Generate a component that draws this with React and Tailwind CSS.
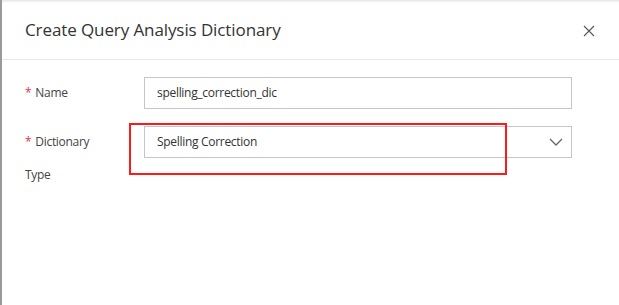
import React from 'react';

export default function App() {
  return (
    <div className="w-[619px] h-[305px] bg-white overflow-hidden relative border-l-2 border-[#9a9a9a] font-['Open_Sans',sans-serif] text-[#333]">
      {/* top shadow */}
      <div className="h-[3px] bg-gradient-to-b from-[#e6e6e6] to-white" />

      {/* Header */}
      <div className="h-[57px] flex items-center justify-between pl-[23px] pr-[24px] border-b border-[#e8e8e8]">
        <h1 className="text-[17px] text-[#333] tracking-[-0.1px] mt-[-2px]">Create Query Analysis Dictionary</h1>
        <button className="text-[#555] mt-[-1px]">
          <svg width="12" height="12" viewBox="0 0 12 12" fill="none" stroke="currentColor" strokeWidth="1.1">
            <path d="M1 1L11 11M11 1L1 11" />
          </svg>
        </button>
      </div>

      {/* Form */}
      <div className="pl-[23px] pt-[17px] text-[12px] tracking-[-0.3px]">
        <div className="flex">
          <div className="w-[119px] h-[32px] flex items-center">
            <span className="text-[#d9363e] mr-[4px]">*</span>
            <span className="text-[#444]">Name</span>
          </div>
          <div className="w-[428px] h-[32px] border border-[#c4c6cc] flex items-center pl-[12px] text-[#333]">
            spelling_correction_dic
          </div>
        </div>

        <div className="flex mt-[17px]">
          <div className="w-[119px] pt-[7px]">
            <div className="h-[18px] leading-[18px]">
              <span className="text-[#d9363e] mr-[4px]">*</span>
              <span className="text-[#444]">Dictionary</span>
            </div>
            <div className="mt-[15px] h-[18px] leading-[18px] text-[#444]">Type</div>
          </div>
          <div className="relative w-[428px] h-[32px] border border-[#c4c6cc] flex items-center justify-between pl-[12px] pr-[8px] text-[#333]">
            <span>Spelling Correction</span>
            <svg width="14" height="8" viewBox="0 0 14 8" fill="none" stroke="#666" strokeWidth="1.3">
              <path d="M1 1L7 7L13 1" />
            </svg>
            {/* red annotation box */}
            <div className="absolute left-[-16px] top-[-4px] w-[378px] h-[52px] border-2 border-[#ff1a1a]" />
          </div>
        </div>
      </div>
    </div>
  );
}
